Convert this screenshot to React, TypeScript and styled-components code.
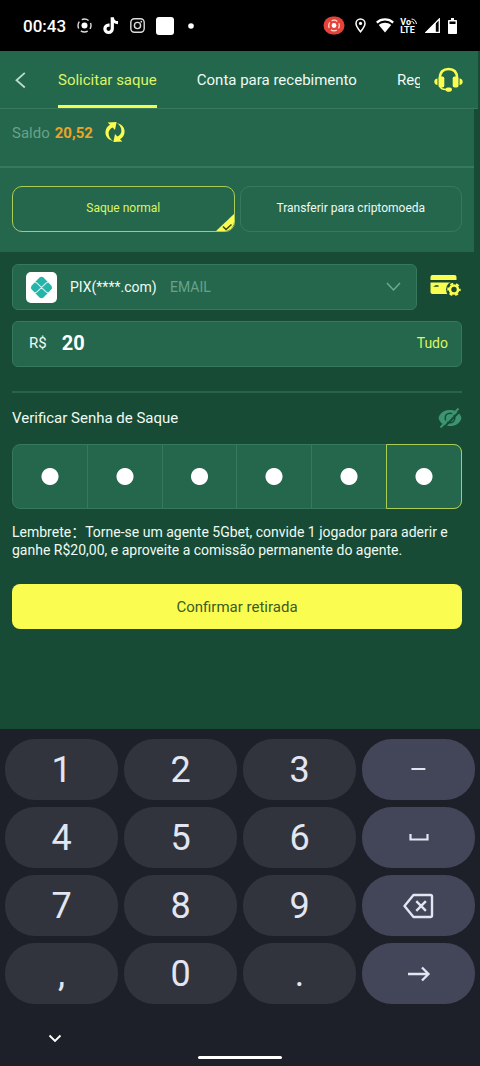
import React, { useState } from "react";
import styled, { createGlobalStyle } from "styled-components";

const c = {
  page: "#184b35",
  panel: "#25674c",
  line: "#36795d",
  yellow: "#fafd50",
  lime: "#dcf565",
  edge: "#a9cd55",
  muted: "#67a38a",
  text: "#effaf4",
  board: "#1d2029",
  key: "#31343c",
  fnKey: "#434658",
  glyph: "#e2e5f2",
};

const GlobalStyle = createGlobalStyle`
  *, *::before, *::after { box-sizing: border-box; }
  body {
    margin: 0;
    background: ${c.page};
    color: ${c.text};
    font-family: Roboto, "Noto Sans CJK SC", sans-serif;
    font-size: 15px;
  }
  button, input, select {
    font: inherit;
    color: inherit;
    background: none;
    border: 0;
    padding: 0;
    margin: 0;
    outline: 0;
  }
  button { cursor: pointer; }
  svg { display: block; flex: none; }
`;

const Screen = styled.div`
  min-height: 100vh;
  display: flex;
  flex-direction: column;
`;

const StatusBar = styled.div`
  height: 51px;
  padding: 0 23px;
  background: #000;
  color: #fff;
  display: flex;
  align-items: center;
  justify-content: space-between;
`;

const StatusGroup = styled.div<{ $gap: number }>`
  display: flex;
  align-items: center;
  gap: ${(p) => p.$gap}px;
`;

const Clock = styled.time`
  font-size: 17px;
  font-weight: 500;
  line-height: 20px;
`;

const Header = styled.header`
  height: 58px;
  margin-right: 2px;
  padding: 0 15px 0 12px;
  background: #23674d;
  border-bottom: 1px solid ${c.line};
  display: flex;
  align-items: stretch;
`;

const IconButton = styled.button`
  display: flex;
  align-items: center;
  flex: none;
`;

const TabStrip = styled.nav`
  flex: 1;
  min-width: 0;
  margin: 0 14px 0 29px;
  overflow: hidden;
  display: flex;
  gap: 40px;
`;

const Tab = styled.button<{ $active?: boolean }>`
  flex: none;
  white-space: nowrap;
  color: ${(p) => (p.$active ? c.lime : c.text)};
  border-top: 3px solid transparent;
  border-bottom: 3px solid ${(p) => (p.$active ? "#eefb55" : "transparent")};
`;

const Summary = styled.section`
  margin-right: 6px;
  background: ${c.panel};
`;

const BalanceRow = styled.div`
  height: 59px;
  padding: 12px 12px 0;
  border-bottom: 2px solid ${c.line};
  display: flex;
  align-items: flex-start;
  line-height: 24px;
  color: ${c.muted};
`;

const Balance = styled.strong`
  margin: 0 12px 0 5px;
  font-weight: 700;
  color: #eda426;
`;

const ModeRow = styled.div`
  padding: 18px 12px 20px;
  display: grid;
  grid-template-columns: 1fr 1fr;
  gap: 5px;
`;

const ModeButton = styled.button<{ $active?: boolean }>`
  position: relative;
  height: 46px;
  padding-bottom: 2px;
  border: 1px solid ${(p) => (p.$active ? c.edge : c.line)};
  border-radius: 10px;
  overflow: hidden;
  font-size: 12px;
  color: ${(p) => (p.$active ? c.lime : c.text)};
`;

const Corner = styled.span`
  position: absolute;
  right: -1px;
  bottom: -1px;
`;

const Form = styled.form`
  flex: 1;
  margin-right: 6px;
  padding: 12px 12px 100px;
`;

const AccountRow = styled.div`
  display: flex;
  gap: 13px;
`;

const Field = styled.div`
  flex: 1;
  height: 46px;
  background: ${c.panel};
  border: 1px solid ${c.line};
  border-radius: 6px;
  display: flex;
  align-items: center;
  padding: 0 13px;
`;

const AccountSelect = styled.select`
  appearance: none;
  margin: 0 13px;
  font-size: 14px;
  line-height: 20px;
`;

const AccountKind = styled.span`
  flex: 1;
  font-size: 14px;
  color: ${c.muted};
`;

const AmountField = styled(Field)`
  margin-top: 11px;
  padding: 0 13px 2px 16px;
`;

const AmountInput = styled.input`
  flex: 1;
  min-width: 0;
  margin-left: 15px;
  font-size: 20px;
  font-weight: 700;
  color: #fff;
`;

const AllButton = styled.button`
  font-size: 14px;
  color: ${c.lime};
`;

const PinHeader = styled.div`
  margin-top: 24px;
  padding-top: 13px;
  border-top: 2px solid #27644a;
  display: flex;
  align-items: center;
  justify-content: space-between;
  line-height: 24px;
`;

const PinRow = styled.div`
  margin-top: 14px;
  height: 65px;
  display: flex;
  border: 1px solid ${c.line};
  border-radius: 8px;
  background: ${c.panel};
`;

const PinBox = styled.input`
  flex: 1;
  min-width: 0;
  color: transparent;
  caret-color: transparent;
  text-align: center;
  border-right: 1px solid ${c.line};

  &:not(:placeholder-shown) {
    background: radial-gradient(circle, #fff 8px, transparent 9px);
  }
  &:last-child {
    margin: -1px;
    border: 1px solid ${c.edge};
    border-radius: 0 8px 8px 0;
  }
`;

const Reminder = styled.p`
  margin: 14px 0 25px;
  font-size: 14px;
  line-height: 18px;
`;

const Confirm = styled.button`
  width: 100%;
  height: 45px;
  border-radius: 8px;
  background: ${c.yellow};
  color: #3d5b22;
`;

const Keyboard = styled.div`
  background: ${c.board};
  color: ${c.glyph};
  padding: 10px 5px 7px;
`;

const Keys = styled.div`
  display: grid;
  grid-template-columns: repeat(4, 1fr);
  gap: 7px 6px;
`;

const Key = styled.button<{ $fn?: boolean }>`
  height: 61px;
  border-radius: 30px;
  background: ${(p) => (p.$fn ? c.fnKey : c.key)};
  font-size: ${(p) => (p.$fn ? 28 : 36)}px;
  line-height: 60px;
  display: flex;
  align-items: center;
  justify-content: center;
`;

const NavBar = styled.div`
  height: 55px;
  padding: 27px 0 0 43px;
  display: flex;
  flex-direction: column;
  align-items: flex-start;
  justify-content: space-between;
  margin-left: 0;
`;

const HideButton = styled.button`
  display: block;
`;

const HomeRow = styled.div`
  display: flex;
  justify-content: center;
  align-self: stretch;
  margin-left: -43px;
`;

const HomeHandle = styled.span`
  width: 84px;
  height: 3px;
  border-radius: 2px;
  background: #fff;
`;

const RecordIcon = () => (
  <svg width="15" height="15" viewBox="0 0 15 15" fill="none" stroke="#ddd">
    <circle cx="7.5" cy="7.5" r="6.5" strokeWidth="1.4" strokeDasharray="7.2 3" strokeDashoffset="3.6" />
    <circle cx="7.5" cy="7.5" r="3" fill="#fff" stroke="none" />
  </svg>
);

const TikTokIcon = () => (
  <svg width="16" height="18" viewBox="0 0 16 18" fill="none" stroke="#fff" strokeWidth="3.2">
    <path d="M9.3 0.5v11.3a3.7 3.7 0 1 1-3.7-3.7h1" />
    <path d="M9.3 0.5c0.2 3 2.6 5 5.7 5.2" />
  </svg>
);

const InstagramIcon = () => (
  <svg width="15" height="15" viewBox="0 0 15 15" fill="none" stroke="#ddd" strokeWidth="1.4">
    <rect x="0.8" y="0.8" width="13.4" height="13.4" rx="3.6" />
    <circle cx="7.5" cy="7.5" r="3.1" />
    <circle cx="11.3" cy="3.7" r="0.9" fill="#ddd" stroke="none" />
  </svg>
);

const AppSquareIcon = () => (
  <svg width="18" height="18" viewBox="0 0 18 18">
    <rect width="18" height="18" rx="3" fill="#fff" />
  </svg>
);

const DotIcon = () => (
  <svg width="6" height="6" viewBox="0 0 6 6">
    <circle cx="3" cy="3" r="2.8" fill="#fff" />
  </svg>
);

const CastIcon = () => (
  <svg width="22" height="19" viewBox="0 0 22 19" fill="none">
    <rect x="0.5" y="0.5" width="21" height="18" rx="9" fill="#e5433a" />
    <circle cx="11" cy="9.5" r="5.3" stroke="#ffd6d0" strokeWidth="1.3" strokeDasharray="6 2.3" strokeDashoffset="3" />
    <circle cx="11" cy="9.5" r="2.4" fill="#fff" />
  </svg>
);

const PinIcon = () => (
  <svg width="11" height="15" viewBox="0 0 11 15" fill="none" stroke="#fff" strokeWidth="1.5">
    <path d="M5.5 13.7C3 10.6 1 8 1 5.4a4.5 4.5 0 0 1 9 0c0 2.6-2 5.2-4.5 8.3z" />
    <circle cx="5.5" cy="5.4" r="1.6" fill="#fff" stroke="none" />
  </svg>
);

const WifiIcon = () => (
  <svg width="18" height="15" viewBox="0 0 18 15" fill="none">
    <path d="M0.8 4.6C5.3 0.4 12.7 0.4 17.200 4.600" stroke="#fff" strokeWidth="2.200" />
    <path d="M2.800 6.900C6.400 3.900 11.600 3.900 15.200 6.900L9 14.600z" fill="#fff" />
  </svg>
);

const VolteBadge = styled.span`
  display: flex;
  flex-direction: column;
  font-size: 9px;
  line-height: 8px;
  font-weight: 700;
`;

const VolteTop = styled.span`
  display: flex;
`;

const SignalWavesIcon = () => (
  <svg width="6" height="7" viewBox="0 0 6 7" fill="none" stroke="#fff" strokeWidth="1">
    <path d="M0.500 1C3.300 1 5.400 3.300 5.400 6M0.500 3.500C2 3.500 3 4.600 3 6" />
  </svg>
);

const SignalIcon = () => (
  <svg width="15" height="15" viewBox="0 0 15 15">
    <path d="M14.300 1V14.300H1z" fill="none" stroke="#fff" strokeWidth="1.300" />
    <path d="M10.800 4.200V14.300H0.700z" fill="#fff" />
  </svg>
);

const BatteryIcon = () => (
  <svg width="9" height="16" viewBox="0 0 9 16">
    <path d="M3 0h3v2h2.200a.8.8 0 0 1 .8.800v12.400a.8.8 0 0 1-.8.800H.8a.8.8 0 0 1-.8-.800V2.800A.8.8 0 0 1 .8 2H3z" fill="#fff" />
    <rect x="1.500" y="3.500" width="6" height="2.500" fill="#000" />
  </svg>
);

const BackIcon = () => (
  <svg width="17" height="18" viewBox="0 0 17 18" fill="none" stroke="#b9dccb" strokeWidth="1.800">
    <path d="M12.800 1.800L4.500 9.300l8.300 7.200" />
  </svg>
);

const HeadsetIcon = () => (
  <svg width="29" height="26" viewBox="0 0 29 26" fill={c.yellow}>
    <path d="M6 11C6 5 9.200 2 14.500 2s8.500 3 8.500 9" fill="none" stroke={c.yellow} strokeWidth="2.600" />
    <rect x="4.500" y="9.500" width="5.800" height="11" rx="1.800" />
    <rect x="18.700" y="9.500" width="5.800" height="11" rx="1.800" />
    <path d="M3.500 11.500v6.500C1.500 18 0.300 16.500 0.300 14.800s1.200-3.200 3.200-3.300zM25.500 11.500v6.500c2 0 3.200-1.500 3.200-3.200s-1.200-3.200-3.200-3.300z" />
    <path d="M6 19.500c.8 2 2.500 3 6 3" fill="none" stroke={c.yellow} strokeWidth="1.600" />
    <rect x="11.500" y="20.500" width="6.500" height="4.200" rx="2.100" />
  </svg>
);

const RefreshIcon = () => (
  <svg width="20" height="22" viewBox="0 0 20 22" fill={c.yellow}>
    <path d="M8 20C2.500 18.500 0 14.800 0.500 10.500C0.800 7.500 2.500 5 5 3.700L2.600 1.500L11.600 1L10 9L7.600 6.400C5 7.800 3.800 9.600 3.600 11.800C3.400 15 5 18 8 20z" />
    <path d="M12 2C17.500 3.500 20 7.200 19.500 11.500C19.200 14.500 17.500 17 15 18.300L17.400 20.500L8.400 21L10 13L12.400 15.600C15 14.200 16.200 12.400 16.400 10.200C16.600 7 15 4 12 2z" />
  </svg>
);

const CornerCheckIcon = () => (
  <svg width="20" height="20" viewBox="0 0 20 20">
    <path d="M20 1v19H0z" fill={c.yellow} />
    <path d="M8 14.500l3 3 5.500-5" fill="none" stroke="#3b4a17" strokeWidth="1.600" />
  </svg>
);

const PixIcon = () => (
  <svg width="31" height="31" viewBox="0 0 31 31">
    <rect width="31" height="31" rx="5" fill="#fff" />
    <path d="M13.500 5.600q2-1.600 4 0l7.700 7.900q1.700 2 0 4l-7.700 7.900q-2 1.600-4 0l-7.700-7.900q-1.700-2 0-4z" fill="#23b5a9" />
    <path
      d="M7.500 10.500h2q1 0 1.800.8l8.400 8.400q.8.800 1.800.8h2M23.500 10.500h-2q-1 0-1.800.8l-8.400 8.400q-.8.800-1.800.8h-2"
      fill="none"
      stroke="#c9f1ed"
      strokeWidth="1.200"
    />
  </svg>
);

const SelectArrowIcon = () => (
  <svg width="20" height="14" viewBox="0 0 20 14" fill="none" stroke="#6faa90" strokeWidth="1.500">
    <path d="M4 3l6.500 7L17 3" />
  </svg>
);

const CardIcon = () => (
  <svg width="32" height="26" viewBox="0 0 32 26" fill={c.yellow}>
    <path d="M2.500 1h22a2 2 0 0 1 2 2v3h-26V3a2 2 0 0 1 2-2z" />
    <path d="M0.500 8.500h26v11.500h-24a2 2 0 0 1-2-2z" />
    <path d="M3.500 12.500l2-1.200h3v1.400h-5z" fill={c.page} />
    <circle cx="24" cy="15.500" r="8" fill={c.page} />
    <circle cx="24" cy="15.500" r="4" fill="none" stroke={c.yellow} strokeWidth="2.600" />
    <circle cx="24" cy="15.500" r="5.700" fill="none" stroke={c.yellow} strokeWidth="2" strokeDasharray="2.980 2.980" strokeDashoffset="1.490" />
  </svg>
);

const EyeOffIcon = () => (
  <svg width="24" height="20" viewBox="0 0 24 20">
    <path d="M0.500 10C2 4.500 6.500 2 12 2S22 4.500 23.500 10C22 15.500 17.500 18 12 18S2 15.500 0.500 10z" fill="#3d9470" />
    <circle cx="12" cy="10" r="4.800" fill="none" stroke={c.page} strokeWidth="1.500" />
    <path d="M5 20.500L22.500 2.500" stroke={c.page} strokeWidth="2" />
    <path d="M2.500 19.500L20.500 0.500" stroke="#3d9470" strokeWidth="2" />
  </svg>
);

const SpaceIcon = () => (
  <svg width="20" height="10" viewBox="0 0 20 10" fill="none" stroke={c.glyph} strokeWidth="2.200">
    <path d="M1.500 1v5.500h17V1" />
  </svg>
);

const BackspaceIcon = () => (
  <svg width="32" height="26" viewBox="0 0 32 26" fill="none" stroke={c.glyph} strokeWidth="2.400">
    <path d="M10.500 2h17a1.500 1.500 0 0 1 1.500 1.500v19a1.500 1.500 0 0 1-1.500 1.500h-17L1.500 13z" strokeLinejoin="round" />
    <path d="M13.300 8.200l9.600 9.600M22.900 8.200l-9.600 9.600" />
  </svg>
);

const EnterIcon = () => (
  <svg width="24" height="16" viewBox="0 0 24 16" fill="none" stroke={c.glyph} strokeWidth="2.300">
    <path d="M1 8h20.500M15 1.500L21.500 8 15 14.500" />
  </svg>
);

const HideIcon = () => (
  <svg width="14" height="14" viewBox="0 0 14 14" fill="none" stroke="#fff" strokeWidth="1.900">
    <path d="M1.500 4.500L7 10l5.500-5.500" />
  </svg>
);

type KeyDef = { label: string; face: React.ReactNode; fn?: boolean };

const digit = (face: string): KeyDef => ({ label: face, face });

const keys: KeyDef[] = [
  digit("1"), digit("2"), digit("3"), { label: "Menos", face: "–", fn: true },
  digit("4"), digit("5"), digit("6"), { label: "Espaço", face: <SpaceIcon />, fn: true },
  digit("7"), digit("8"), digit("9"), { label: "Apagar", face: <BackspaceIcon />, fn: true },
  digit(","), digit("0"), digit("."), { label: "Avançar", face: <EnterIcon />, fn: true },
];

export default function App() {
  const [amount, setAmount] = useState("20");
  const [pin, setPin] = useState(["1", "2", "3", "4", "5", "6"]);

  return (
    <Screen>
      <GlobalStyle />
      <StatusBar>
        <StatusGroup $gap={14}>
          <StatusGroup $gap={11}>
            <Clock>00:43</Clock>
            <RecordIcon />
            <TikTokIcon />
            <InstagramIcon />
            <AppSquareIcon />
          </StatusGroup>
          <DotIcon />
        </StatusGroup>
        <StatusGroup $gap={6}>
          <StatusGroup $gap={10}>
            <CastIcon />
            <PinIcon />
            <WifiIcon />
          </StatusGroup>
          <StatusGroup $gap={8}>
            <VolteBadge>
              <VolteTop>
                Vo
                <SignalWavesIcon />
              </VolteTop>
              LTE
            </VolteBadge>
            <SignalIcon />
            <BatteryIcon />
          </StatusGroup>
        </StatusGroup>
      </StatusBar>

      <Header>
        <IconButton aria-label="Voltar">
          <BackIcon />
        </IconButton>
        <TabStrip>
          <Tab $active>Solicitar saque</Tab>
          <Tab>Conta para recebimento</Tab>
          <Tab>Reg</Tab>
        </TabStrip>
        <IconButton aria-label="Suporte">
          <HeadsetIcon />
        </IconButton>
      </Header>

      <Summary>
        <BalanceRow>
          Saldo
          <Balance>20,52</Balance>
          <IconButton aria-label="Atualizar saldo">
            <RefreshIcon />
          </IconButton>
        </BalanceRow>
        <ModeRow>
          <ModeButton $active>
            Saque normal
            <Corner>
              <CornerCheckIcon />
            </Corner>
          </ModeButton>
          <ModeButton>Transferir para criptomoeda</ModeButton>
        </ModeRow>
      </Summary>

      <Form onSubmit={(e) => e.preventDefault()}>
        <AccountRow>
          <Field>
            <PixIcon />
            <AccountSelect aria-label="Conta para recebimento">
              <option>PIX(****.com)</option>
            </AccountSelect>
            <AccountKind>EMAIL</AccountKind>
            <SelectArrowIcon />
          </Field>
          <IconButton type="button" aria-label="Gerenciar contas">
            <CardIcon />
          </IconButton>
        </AccountRow>

        <AmountField>
          <label htmlFor="amount">R$</label>
          <AmountInput
            id="amount"
            inputMode="decimal"
            value={amount}
            onChange={(e) => setAmount(e.target.value)}
          />
          <AllButton type="button" onClick={() => setAmount("20,52")}>
            Tudo
          </AllButton>
        </AmountField>

        <PinHeader>
          <span id="pin-label">Verificar Senha de Saque</span>
          <IconButton type="button" aria-label="Mostrar senha">
            <EyeOffIcon />
          </IconButton>
        </PinHeader>
        <PinRow role="group" aria-labelledby="pin-label">
          {pin.map((value, i) => (
            <PinBox
              key={i}
              type="password"
              maxLength={1}
              placeholder=" "
              aria-label={`Dígito ${i + 1}`}
              value={value}
              onChange={(e) => setPin(pin.map((v, j) => (j === i ? e.target.value : v)))}
            />
          ))}
        </PinRow>

        <Reminder>
          Lembrete：Torne-se um agente 5Gbet, convide 1 jogador para aderir e ganhe R$20,00, e
          aproveite a comissão permanente do agente.
        </Reminder>
        <Confirm type="submit">Confirmar retirada</Confirm>
      </Form>

      <Keyboard>
        <Keys>
          {keys.map((k) => (
            <Key key={k.label} aria-label={k.label} $fn={k.fn}>
              {k.face}
            </Key>
          ))}
        </Keys>
        <NavBar>
          <HideButton aria-label="Ocultar teclado">
            <HideIcon />
          </HideButton>
          <HomeRow>
            <HomeHandle />
          </HomeRow>
        </NavBar>
      </Keyboard>
    </Screen>
  );
}
